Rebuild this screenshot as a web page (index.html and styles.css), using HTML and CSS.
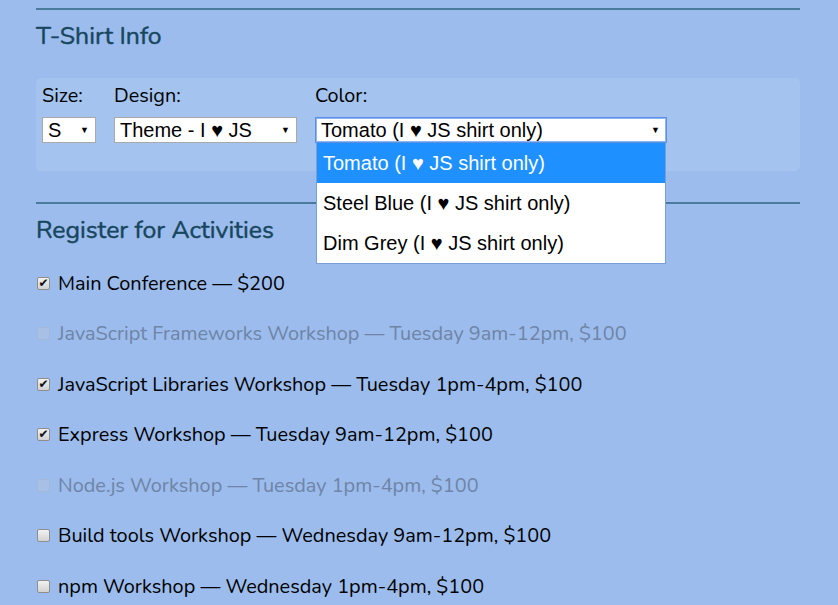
FILE: index.html
```html
<!DOCTYPE html>
<html>
<head>
<meta charset="utf-8">
<link rel="stylesheet" href="styles.css">
</head>
<body>
<div class="page">
  <section class="block shirt">
    <h2 class="title">T-Shirt Info</h2>
    <div class="panel">
      <div class="field">
        <span class="label">Size:</span>
        <div class="select size"><span>S</span><span class="arrow">▼</span></div>
      </div>
      <div class="field">
        <span class="label">Design:</span>
        <div class="select design"><span>Theme - I ♥ JS</span><span class="arrow">▼</span></div>
      </div>
      <div class="field color-field">
        <span class="label">Color:</span>
        <div class="select color focused"><span>Tomato (I ♥ JS shirt only)</span><span class="arrow">▼</span></div>
        <ul class="options">
          <li class="opt active">Tomato (I ♥ JS shirt only)</li>
          <li class="opt">Steel Blue (I ♥ JS shirt only)</li>
          <li class="opt">Dim Grey (I ♥ JS shirt only)</li>
        </ul>
      </div>
    </div>
  </section>
  <section class="block activities">
    <h2 class="title">Register for Activities</h2>
    <ul class="list">
      <li class="row"><span class="box checked">✔</span>Main Conference — $200</li>
      <li class="row disabled"><span class="box"></span>JavaScript Frameworks Workshop — Tuesday 9am-12pm, $100</li>
      <li class="row"><span class="box checked">✔</span>JavaScript Libraries Workshop — Tuesday 1pm-4pm, $100</li>
      <li class="row"><span class="box checked">✔</span>Express Workshop — Tuesday 9am-12pm, $100</li>
      <li class="row disabled"><span class="box"></span>Node.js Workshop — Tuesday 1pm-4pm, $100</li>
      <li class="row"><span class="box"></span>Build tools Workshop — Wednesday 9am-12pm, $100</li>
      <li class="row"><span class="box"></span>npm Workshop — Wednesday 1pm-4pm, $100</li>
    </ul>
  </section>
</div>
</body>
</html>
```
FILE: styles.css
```css
html, body {
  margin: 0;
  padding: 0;
}
body {
  background: #9bbcec;
  font-family: "Nunito", "Lato", "Noto Sans", sans-serif;
  color: #000;
  height: 605px;
  overflow: hidden;
}
.page {
  margin: 0 38px 0 36px;
  padding-top: 8px;
}
.block {
  border-top: 2px solid #4a7a9e;
}
.title {
  margin: 0;
  font-size: 24.8px;
  font-weight: 400;
  -webkit-text-stroke: 0.45px #17465e;
  color: #17465e;
  line-height: 30px;
  padding-top: 11px;
}
.shirt .title {
  padding-bottom: 27px;
}
.panel {
  background: #a4c3ee;
  border-radius: 5px;
  height: 93px;
  padding: 6px 6px 0 6px;
  box-sizing: border-box;
  display: flex;
  gap: 18px;
}
.field {
  display: flex;
  flex-direction: column;
  gap: 9px;
  position: relative;
}
.label {
  font-size: 19.8px;
  line-height: 24px;
}
.select {
  box-sizing: border-box;
  height: 26px;
  background: #fff;
  border: 1px solid #a9a9a9;
  font-family: "Liberation Sans", Arial, sans-serif;
  font-size: 20px;
  display: flex;
  align-items: center;
  justify-content: space-between;
  padding: 0 6px 0 5px;
}
.arrow {
  font-size: 9px;
}
.size { width: 54px; }
.design { width: 183px; }
.color { width: 352px; }
.focused {
  border: 1px solid #5b8fe8;
  box-shadow: 0 0 0 1px #8fb4f0 inset;
}
.options {
  position: absolute;
  top: 59px;
  left: 1px;
  width: 350px;
  margin: 0;
  padding: 0;
  list-style: none;
  background: #fff;
  border: 1px solid #7a9fd6;
  border-top: none;
  box-sizing: border-box;
  font-family: "Liberation Sans", Arial, sans-serif;
  font-size: 20px;
  z-index: 2;
}
.opt {
  height: 40px;
  line-height: 40px;
  padding-left: 6px;
}
.opt.active {
  background: #1e90ff;
  color: #fff;
}
.activities {
  margin-top: 31px;
}
.list {
  list-style: none;
  margin: 0;
  padding: 13px 0 0 0;
}
.row {
  display: flex;
  align-items: center;
  height: 50.5px;
  font-size: 19.9px;
  padding-left: 1px;
}
.box {
  box-sizing: border-box;
  width: 13px;
  height: 13px;
  border: 1px solid #8e8e8e;
  border-radius: 2px;
  background: linear-gradient(#f2f2f2, #d2d2d2);
  margin-right: 8px;
  font-size: 12px;
  font-weight: bold;
  line-height: 11px;
  text-align: center;
  color: #111;
  font-family: "DejaVu Sans", sans-serif;
  overflow: hidden;
}
.disabled {
  color: #6f84a6;
}
.disabled .box {
  border-color: #a3b7d6;
  background: #a9c0e6;
}
```
